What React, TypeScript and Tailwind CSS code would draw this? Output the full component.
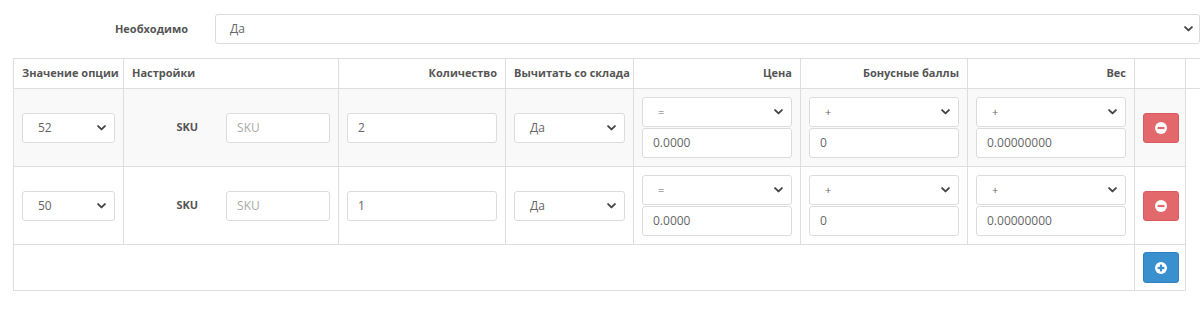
import React from 'react'

const font = { fontFamily: '"Open Sans", "Liberation Sans", sans-serif' }

function Chevron() {
  return (
    <svg width="9" height="6" viewBox="0 0 9 6" className="shrink-0">
      <path d="M1.1 1.1 L4.5 4.4 L7.9 1.1" fill="none" stroke="#444" strokeWidth="1.9" strokeLinecap="round" strokeLinejoin="round" />
    </svg>
  )
}

function Select({ value, className = '', small = false }: { value: string; className?: string; small?: boolean }) {
  return (
    <div
      className={`h-[30px] flex items-center justify-between bg-white border border-[#dcdcdc] rounded-[3px] pl-[15px] pr-[8px] text-[#666] ${small ? 'text-[11px]' : 'text-[12px]'} ${className}`}
    >
      <span>{value}</span>
      <Chevron />
    </div>
  )
}

function Input({ value, placeholder = false, className = '' }: { value: string; placeholder?: boolean; className?: string }) {
  return (
    <div
      className={`h-[30px] flex items-center bg-white border border-[#dcdcdc] rounded-[3px] px-[10px] text-[12px] ${placeholder ? 'text-[#aaa]' : 'text-[#666]'} ${className}`}
    >
      {value}
    </div>
  )
}

function CircleIcon({ plus = false, color }: { plus?: boolean; color: string }) {
  return (
    <svg width="12" height="12" viewBox="0 0 12 12">
      <circle cx="6" cy="6" r="6" fill="#fff" />
      <rect x="2.6" y="4.9" width="6.8" height="2.2" fill={color} />
      {plus && <rect x="4.9" y="2.6" width="2.2" height="6.8" fill={color} />}
    </svg>
  )
}

const rows = [
  { opt: '52', qty: '2', bg: 'bg-[#f9f9f9]' },
  { opt: '50', qty: '1', bg: 'bg-white' },
]

export default function App() {
  const th = 'h-[30px] px-2 border border-[#dedede] font-bold text-[11px] text-[#555] whitespace-nowrap overflow-visible'
  const td = 'px-2 py-2 border border-[#dedede] align-middle'

  return (
    <div className="w-[1200px] h-[315px] bg-white overflow-hidden" style={font}>
      {/* REQUIRED */}
      <div className="flex items-center h-[30px] mt-[14px]">
        <div className="w-[189px] text-right font-bold text-[11px] text-[#555]">Необходимо</div>
        <div className="ml-[27px] w-[990px] h-[30px] flex items-center justify-between border border-[#dcdcdc] rounded-[3px] pl-[14px] pr-[6px] text-[12px] text-[#666]">
          <span>Да</span>
          <Chevron />
        </div>
      </div>

      {/* TABLE */}
      <table className="ml-[13px] mt-[14px] border-collapse table-fixed w-[1220px]">
        <colgroup>
          <col className="w-[110px]" />
          <col className="w-[215px]" />
          <col className="w-[167px]" />
          <col className="w-[128px]" />
          <col className="w-[167px]" />
          <col className="w-[167px]" />
          <col className="w-[167px]" />
          <col className="w-[51px]" />
          <col className="w-[48px]" />
        </colgroup>
        <thead>
          <tr>
            <th className={`${th} text-left`}>Значение опции</th>
            <th className={`${th} text-left`}>Настройки</th>
            <th className={`${th} text-right`}>Количество</th>
            <th className={`${th} text-left`}>Вычитать со склада</th>
            <th className={`${th} text-right`}>Цена</th>
            <th className={`${th} text-right`}>Бонусные баллы</th>
            <th className={`${th} text-right`}>Вес</th>
            <th className={th}></th>
            <th className={th}></th>
          </tr>
        </thead>
        <tbody>
          {rows.map((r, i) => (
            <tr key={i} className={r.bg}>
              <td className={td}>
                <Select value={r.opt} />
              </td>
              <td className={td}>
                <div className="flex items-center">
                  <div className="w-[67px] text-right font-bold text-[11px] text-[#555]">SKU</div>
                  <Input value="SKU" placeholder className="ml-[28px] w-[105px]" />
                </div>
              </td>
              <td className={td}>
                <Input value={r.qty} />
              </td>
              <td className={td}>
                <Select value="Да" />
              </td>
              <td className={td}>
                <Select value="=" small />
                <Input value="0.0000" className="mt-px" />
              </td>
              <td className={td}>
                <Select value="+" small />
                <Input value="0" className="mt-px" />
              </td>
              <td className={td}>
                <Select value="+" small />
                <Input value="0.00000000" className="mt-px" />
              </td>
              <td className={`${td} text-left`}>
                <button className="w-[36px] h-[30px] rounded-[3px] bg-[#e3686b] border border-[#d95b5e] flex items-center justify-center">
                  <CircleIcon color="#e3686b" />
                </button>
              </td>
              <td className="bg-white"></td>
            </tr>
          ))}
          <tr>
            <td colSpan={7} className="h-[46px] border border-[#dedede]"></td>
            <td className="px-2 py-[7px] border border-[#dedede] align-middle">
              <button className="w-[36px] h-[31px] rounded-[3px] bg-[#3a8fcf] border border-[#2f82c2] flex items-center justify-center">
                <CircleIcon plus color="#3a8fcf" />
              </button>
            </td>
            <td></td>
          </tr>
        </tbody>
      </table>
    </div>
  )
}
